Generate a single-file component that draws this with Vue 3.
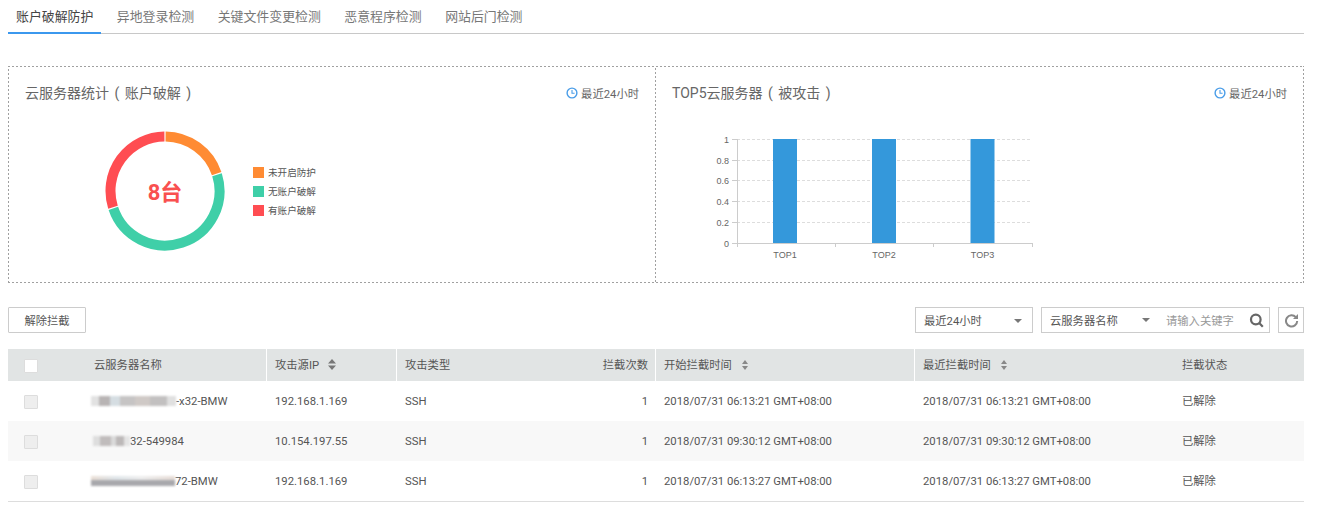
<template>
  <div class="page">
    <div class="tabs">
      <div v-for="(tab, i) in tabs" :key="tab" class="tab" :class="{ active: i === 0 }">{{ tab }}</div>
    </div>

    <div class="panels">
      <section class="panel">
        <div class="panel-head">
          <h3>云服务器统计 ( 账户破解 )</h3>
          <span class="since">
            <svg width="12" height="12" viewBox="0 0 12 12" fill="none" stroke="#4a9de8">
              <circle cx="6" cy="6" r="4.9" stroke-width="1.4" />
              <path d="M6 3v3.2h2.6" stroke-width="1.1" />
            </svg>
            最近24小时
          </span>
        </div>
        <div class="donut-row">
          <div class="donut">
            <svg width="120" height="120" viewBox="0 0 120 120">
              <path v-for="s in donut" :key="s.color" :d="s.d" :stroke="s.color" stroke-width="10" fill="none" />
            </svg>
            <div class="donut-label">8台</div>
          </div>
          <ul class="legend">
            <li v-for="l in legend" :key="l.name"><i :style="{ background: l.color }"></i>{{ l.name }}</li>
          </ul>
        </div>
      </section>

      <section class="panel panel-right">
        <div class="panel-head">
          <h3>TOP5云服务器 ( 被攻击 )</h3>
          <span class="since">
            <svg width="12" height="12" viewBox="0 0 12 12" fill="none" stroke="#4a9de8">
              <circle cx="6" cy="6" r="4.9" stroke-width="1.4" />
              <path d="M6 3v3.2h2.6" stroke-width="1.1" />
            </svg>
            最近24小时
          </span>
        </div>
        <svg class="chart" width="400" height="144" viewBox="0 0 400 144">
          <g v-for="t in yTicks" :key="t.label">
            <line x1="65" :x2="360" :y1="t.y" :y2="t.y" stroke="#ddd" stroke-dasharray="3 2" v-if="t.label !== '0'" />
            <line x1="60" x2="65" :y1="t.y" :y2="t.y" stroke="#ccc" />
            <text x="57" :y="t.y + 3.5" text-anchor="end">{{ t.label }}</text>
          </g>
          <line x1="65.5" x2="65.5" y1="16" y2="120" stroke="#ccc" />
          <line x1="65" x2="360" y1="120.5" y2="120.5" stroke="#ccc" />
          <line v-for="x in [65.5, 163.5, 261.5, 360.5]" :key="x" :x1="x" :x2="x" y1="120" y2="124" stroke="#ccc" />
          <g v-for="b in bars" :key="b.label">
            <rect :x="b.x" y="16" width="24" height="104" fill="#3498db" />
            <text :x="b.x + 12" y="135" text-anchor="middle">{{ b.label }}</text>
          </g>
        </svg>
      </section>
    </div>

    <div class="toolbar">
      <button class="btn" type="button">解除拦截</button>
      <div class="filters">
        <div class="select range">最近24小时<i class="caret"></i></div>
        <div class="search">
          <div class="select-in">云服务器名称<i class="caret"></i></div>
          <span class="placeholder">请输入关键字</span>
          <svg width="15" height="15" viewBox="0 0 15 15" fill="none" stroke="#666" stroke-width="2.2">
            <circle cx="6.8" cy="6.5" r="4.8" />
            <path d="M10.2 10l3.6 3.8" />
          </svg>
        </div>
        <button class="icon-btn" type="button">
          <svg width="15" height="15" viewBox="0 0 15 15" fill="none" stroke="#888" stroke-width="2">
            <path d="M11.8 4.2A5.6 5.6 0 1 0 13.2 8" />
            <path d="M14 1v5H9z" fill="#888" stroke="none" />
          </svg>
        </button>
      </div>
    </div>

    <table class="grid">
      <colgroup>
        <col v-for="w in colWidths" :key="w.id" :style="{ width: w.px + 'px' }" />
      </colgroup>
      <thead>
        <tr>
          <th><span class="check head-check"></span></th>
          <th class="sep">云服务器名称</th>
          <th class="sep">攻击源IP<svg class="sort sort-wide" width="8" height="11" viewBox="0 0 8 11"><path d="M4 0l4 4.4H0zM4 11L0 6.6h8z" fill="#777" /></svg></th>
          <th>攻击类型</th>
          <th class="num sep">拦截次数</th>
          <th class="sep">开始拦截时间<svg class="sort" width="6" height="10" viewBox="0 0 6 10"><path d="M3 0l3 4H0zM3 10L0 6h6z" fill="#888" /></svg></th>
          <th>最近拦截时间<svg class="sort" width="6" height="10" viewBox="0 0 6 10"><path d="M3 0l3 4H0zM3 10L0 6h6z" fill="#888" /></svg></th>
          <th>拦截状态</th>
        </tr>
      </thead>
      <tbody>
        <tr v-for="r in rows" :key="r.tail">
          <td><span class="check"></span></td>
          <td class="name">
            <span class="smear" :style="{ width: r.blur + 'px', background: r.smear, marginLeft: r.shift + 'px' }"></span>{{ r.tail }}
          </td>
          <td>{{ r.ip }}</td>
          <td>SSH</td>
          <td class="num">1</td>
          <td>{{ r.time }}</td>
          <td>{{ r.time }}</td>
          <td>已解除</td>
        </tr>
      </tbody>
    </table>
  </div>
</template>

<script setup>
const tabs = ['账户破解防护', '异地登录检测', '关键文件变更检测', '恶意程序检测', '网站后门检测']

// arc between two angles (degrees from 12 o'clock, clockwise)
function arc(from, to) {
  const r = 54.5
  const pt = (a) => {
    const rad = (a * Math.PI) / 180
    return (60 + r * Math.sin(rad)).toFixed(2) + ' ' + (60 - r * Math.cos(rad)).toFixed(2)
  }
  return 'M' + pt(from) + ' A' + r + ' ' + r + ' 0 ' + (to - from > 180 ? 1 : 0) + ' 1 ' + pt(to)
}

const donut = [
  { color: '#ff8b33', d: arc(0.6, 71.4) },
  { color: '#3fcfa8', d: arc(72.6, 251.4) },
  { color: '#ff4d52', d: arc(252.6, 359.4) }
]

const legend = [
  { name: '未开启防护', color: '#ff8b33' },
  { name: '无账户破解', color: '#3fcfa8' },
  { name: '有账户破解', color: '#ff4d52' }
]

const yTicks = [
  { label: '1', y: 16.5 },
  { label: '0.8', y: 37.5 },
  { label: '0.6', y: 57.5 },
  { label: '0.4', y: 78.5 },
  { label: '0.2', y: 99.5 },
  { label: '0', y: 120.5 }
]

const bars = [
  { label: 'TOP1', x: 101 },
  { label: 'TOP2', x: 200 },
  { label: 'TOP3', x: 298.5 }
]

const colWidths = [
  { id: 'check', px: 78 },
  { id: 'name', px: 181 },
  { id: 'ip', px: 130 },
  { id: 'type', px: 130 },
  { id: 'count', px: 129 },
  { id: 'start', px: 259 },
  { id: 'last', px: 259 },
  { id: 'state', px: 130 }
]

// blurred-out host names
const rows = [
  {
    tail: '-x32-BMW',
    blur: 85,
    shift: -3,
    smear: 'linear-gradient(90deg,#e2e2e2 0 10%,#b8b4b4 10% 22%,#d5dde2 22% 34%,#c6c4c4 34% 52%,#cfc9c6 52% 70%,#c2c0c0 70% 90%,#e0e0e0 90%)',
    ip: '192.168.1.169',
    time: '2018/07/31 06:13:21 GMT+08:00'
  },
  {
    tail: '32-549984',
    blur: 37,
    shift: -1,
    smear: 'linear-gradient(90deg,#dedede 0 20%,#c0bcbc 20% 50%,#dadada 50% 62%,#bcb8b8 62% 85%,#e4e4e4 85%)',
    ip: '10.154.197.55',
    time: '2018/07/31 09:30:12 GMT+08:00'
  },
  {
    tail: '72-BMW',
    blur: 84,
    shift: -3,
    smear: 'linear-gradient(180deg,transparent 0 45%,#a8a8ac 45% 100%),linear-gradient(90deg,#eadfd6,#e0e6ea 30%,#eee 60%,#e6dcd6)',
    ip: '192.168.1.169',
    time: '2018/07/31 06:13:27 GMT+08:00'
  }
]
</script>

<style>
html, body {
  background: #fff;
}
</style>

<style scoped>
.page {
  width: 1296px;
  margin-left: 8px;
  font-family: Roboto, "Noto Sans CJK SC", sans-serif;
  font-size: 11.3px;
  color: #555;
}

.tabs {
  display: flex;
  gap: 7.5px;
  height: 34px;
  border-bottom: 1px solid #c8c8c8;
  box-sizing: border-box;
}

.tab {
  padding: 0 8px;
  height: 34px;
  line-height: 33px;
  font-size: 12.9px;
  color: #777;
  box-sizing: border-box;
}

.tab.active {
  color: #444;
  border-bottom: 2px solid #3b98ee;
}

/* the dashes of a plain dashed border come out too long */
.panels {
  display: flex;
  height: 217px;
  margin-top: 32px;
  padding: 1px;
  box-sizing: border-box;
  background:
    repeating-linear-gradient(90deg, #a0a0a0 0 2px, transparent 2px 4px) top / 100% 1px no-repeat,
    repeating-linear-gradient(90deg, #a0a0a0 0 2px, transparent 2px 4px) bottom / 100% 1px no-repeat,
    repeating-linear-gradient(0deg, #a0a0a0 0 2px, transparent 2px 4px) left / 1px 100% no-repeat,
    repeating-linear-gradient(0deg, #a0a0a0 0 2px, transparent 2px 4px) right / 1px 100% no-repeat;
}

.panel {
  flex: 0 0 646px;
  padding: 15px 16px 0;
  box-sizing: border-box;
}

.panel-right {
  flex: 1;
  padding-left: 17px;
  background: repeating-linear-gradient(0deg, #a0a0a0 0 2px, transparent 2px 4px) left / 1px 100% no-repeat;
}

.panel-head {
  display: flex;
  justify-content: space-between;
  align-items: center;
  height: 20px;
}

h3 {
  margin: 0;
  font-size: 14px;
  font-weight: 400;
  color: #666;
  word-spacing: 2px;
}

.since {
  display: flex;
  align-items: center;
  gap: 3px;
  margin-top: 2px;
  color: #666;
}

.donut-row {
  display: flex;
  align-items: center;
  margin: 29px 0 0 80px;
}

.donut {
  position: relative;
  width: 120px;
  height: 120px;
}

.donut svg {
  display: block;
}

.donut-label {
  position: absolute;
  inset: -2px 0 0;
  display: flex;
  align-items: center;
  justify-content: center;
  font-size: 22px;
  font-weight: 700;
  color: #f9504f;
}

.legend {
  margin: 0 0 0 28px;
  padding: 0;
  list-style: none;
  font-size: 9.6px;
  color: #555;
}

.legend li {
  display: flex;
  align-items: center;
  gap: 4px;
  height: 19px;
}

.legend i {
  width: 11px;
  height: 11px;
}

.chart {
  display: block;
  margin-top: 21px;
}

.chart text {
  font-family: "Liberation Sans", sans-serif;
  font-size: 9px;
  fill: #666;
}

.toolbar {
  display: flex;
  justify-content: space-between;
  margin-top: 24px;
  height: 26px;
}

.btn {
  width: 78px;
  height: 26px;
  padding: 0;
  background: #fff;
  border: 1px solid #ccc;
  border-radius: 1px;
  font: inherit;
  color: #555;
}

.filters {
  display: flex;
}

.select {
  position: relative;
  display: flex;
  align-items: center;
  box-sizing: border-box;
  width: 118px;
  height: 26px;
  padding-left: 8px;
  border: 1px solid #ccc;
}

.caret {
  position: absolute;
  top: 11px;
  width: 0;
  height: 0;
  border: 4px solid transparent;
  border-top-color: #777;
  border-bottom-width: 0;
}

.range .caret {
  right: 10px;
}

.search {
  display: flex;
  align-items: center;
  box-sizing: border-box;
  width: 229px;
  height: 26px;
  margin-left: 8px;
  border: 1px solid #ccc;
}

.select-in {
  position: relative;
  width: 124px;
  padding-left: 8px;
  box-sizing: border-box;
}

.select-in .caret {
  top: 6px;
  right: 16px;
}

.placeholder {
  width: 83px;
  color: #999;
}

.icon-btn {
  display: flex;
  align-items: center;
  justify-content: center;
  width: 26px;
  height: 26px;
  margin-left: 8px;
  padding: 0;
  background: #fff;
  border: 1px solid #ccc;
}

.grid {
  width: 1296px;
  margin-top: 16px;
  table-layout: fixed;
  border-collapse: collapse;
  border-bottom: 1px solid #ddd;
}

th {
  height: 32px;
  padding: 2px 8px 0;
  background: #e1e4e4;
  font-weight: 400;
  line-height: 16px;
  text-align: left;
  box-sizing: border-box;
}

th.sep {
  box-shadow: inset -1px 0 #fff;
}

td {
  height: 40px;
  padding: 2px 8px 0;
  line-height: 16px;
  box-sizing: border-box;
}

tbody tr:nth-child(even) td {
  background: #f8f8f8;
}

th:first-child,
td:first-child {
  padding-left: 16px;
}

.num {
  text-align: right;
}

.check {
  display: block;
  width: 14px;
  height: 14px;
  box-sizing: border-box;
  background: #eee;
  border: 1px solid #ddd;
  border-radius: 1px;
}

.head-check {
  background: #fff;
}

.sort {
  margin-left: 10px;
  vertical-align: -1px;
}

.sort-wide {
  margin-left: 9px;
}

.smear {
  display: inline-block;
  height: 10px;
  vertical-align: -1px;
  filter: blur(1px);
}
</style>
